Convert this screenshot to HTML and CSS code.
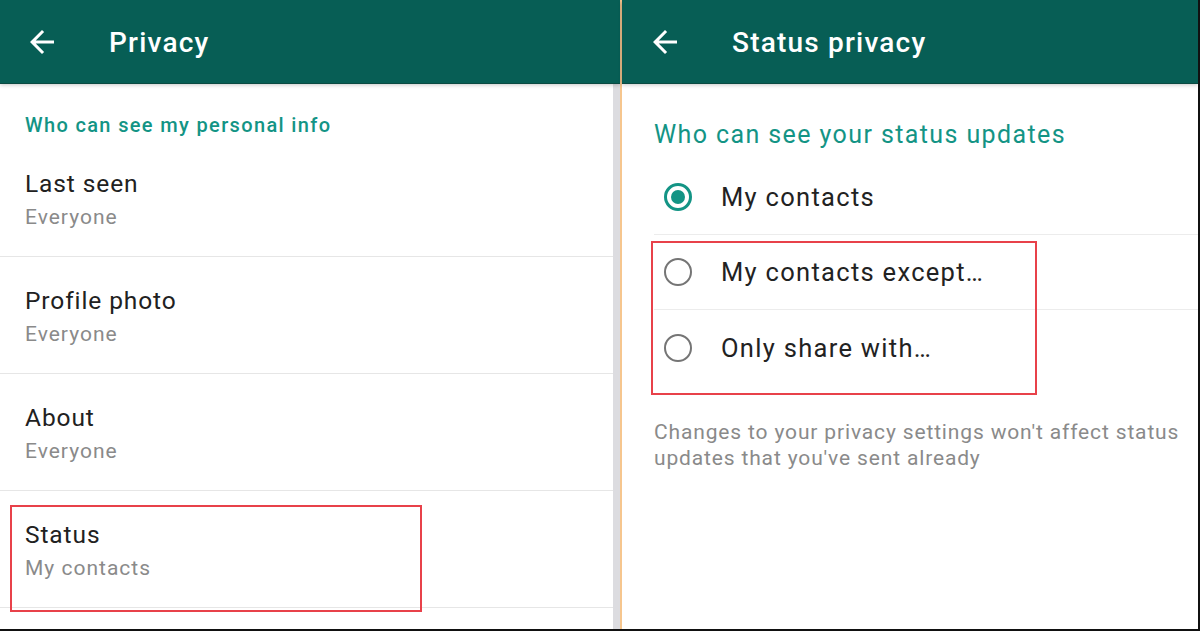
FILE: index.html
```html
<!DOCTYPE html>
<html>
<head>
<meta charset="utf-8">
<link rel="stylesheet" href="styles.css">
</head>
<body>
<div class="frame">
  <section class="panel left">
    <header class="bar">
      <svg class="back" viewBox="0 0 24 24" width="36" height="36"><path d="M20 11H7.83l5.59-5.59L12 4l-8 8 8 8 1.41-1.41L7.83 13H20v-2z" fill="#fff"/></svg>
      <h1 class="title t-left">Privacy</h1>
    </header>
    <div class="body">
      <div class="list">
        <div class="section">Who can see my personal info</div>
        <div class="item"><div class="name">Last seen</div><div class="value">Everyone</div></div>
        <div class="item"><div class="name">Profile photo</div><div class="value">Everyone</div></div>
        <div class="item"><div class="name">About</div><div class="value">Everyone</div></div>
        <div class="item"><div class="name">Status</div><div class="value">My contacts</div><div class="mark mark-status"></div></div>
        <div class="item tail"></div>
      </div>
      <div class="scroll"></div>
    </div>
  </section>
  <div class="split"></div>
  <section class="panel right">
    <header class="bar">
      <svg class="back back-r" viewBox="0 0 24 24" width="36" height="36"><path d="M20 11H7.83l5.59-5.59L12 4l-8 8 8 8 1.41-1.41L7.83 13H20v-2z" fill="#fff"/></svg>
      <h1 class="title t-right">Status privacy</h1>
    </header>
    <div class="rbody">
      <div class="rsection">Who can see your status updates</div>
      <div class="options">
        <div class="opt"><span class="radio on"></span><span class="olabel">My contacts</span></div>
        <div class="opt"><span class="radio"></span><span class="olabel">My contacts except…</span></div>
        <div class="opt last"><span class="radio"></span><span class="olabel">Only share with…</span></div>
        <div class="mark mark-opts"></div>
      </div>
      <p class="note">Changes to your privacy settings won't affect status updates that you've sent already</p>
    </div>
  </section>
</div>
</body>
</html>
```

FILE: styles.css
```css
html, body { margin: 0; padding: 0; background: #fff; }
.frame {
  width: 1200px; height: 631px; box-sizing: border-box;
  border-right: 2px solid #111; border-bottom: 2px solid #111;
  display: flex; overflow: hidden;
  font-family: Roboto, "Liberation Sans", sans-serif;
}
.panel { display: flex; flex-direction: column; height: 100%; }
.left { width: 620px; flex: none; }
.right { flex: 1; }
.split { width: 2px; background: #f6c68e; flex: none; }
.bar {
  height: 83px; flex: none; background: #075e55;
  display: flex; align-items: center;
  box-shadow: 0 1px 0 #0b4a42, 0 2px 4px rgba(0,0,0,0.22);
  position: relative; z-index: 1;
}
.back { margin-left: 24px; flex: none; }
.back-r { margin-left: 25px; }
.title { margin: 0 0 -2px 0; color: #fff; font-weight: 500; font-size: 28px; letter-spacing: 1.2px; }
.t-left { margin-left: 49px; }
.t-right { margin-left: 49px; }
.body { flex: 1; display: flex; }
.list { flex: 1; }
.scroll { width: 7px; background: #dcdce0; }
.section {
  color: #139485; font-weight: 500; font-size: 20px; letter-spacing: 1.35px;
  padding: 30px 0 0 25px; height: 27px;
}
.item {
  position: relative; height: 117px; border-bottom: 1px solid #e6e6e6;
  box-sizing: border-box; padding: 29px 0 0 25px;
}
.name { font-size: 24.5px; color: #212121; line-height: 30px; letter-spacing: 0.9px; }
.value { font-size: 21px; color: #8a8a8a; line-height: 26px; margin-top: 5px; letter-spacing: 1px; }
.item.tail { border-bottom: none; }
.mark { position: absolute; border: 2px solid #e8414a; box-sizing: border-box; }
.mark-status { left: 10px; top: 14px; width: 412px; height: 107px; }
.rbody { flex: 1; padding-left: 32px; }
.rsection { color: #139485; font-size: 25px; padding-top: 37px; height: 33px; letter-spacing: 1.4px; }
.options { position: relative; margin-top: 7px; }
.opt {
  display: flex; align-items: center; height: 75px;
  border-bottom: 1px solid #ececec; box-sizing: border-box;
}
.opt.last { border-bottom: none; }
.radio {
  width: 28px; height: 28px; border: 2.5px solid #757575; border-radius: 50%;
  margin-left: 10px; flex: none; position: relative; box-sizing: border-box;
}
.radio.on { border: 3px solid #139485; }
.radio.on::after {
  content: ""; position: absolute; left: 4px; top: 4px;
  width: 14px; height: 14px; border-radius: 50%; background: #139485;
}
.olabel { margin-left: 29px; font-size: 25.5px; color: #222; letter-spacing: 1.3px; }
.mark-opts { left: -3px; top: 81px; width: 386px; height: 154px; }
.note {
  margin: 34px 0 0 0; font-size: 21px; color: #8a8a8a; line-height: 26px;
  width: 540px; letter-spacing: 0.85px;
}
```
